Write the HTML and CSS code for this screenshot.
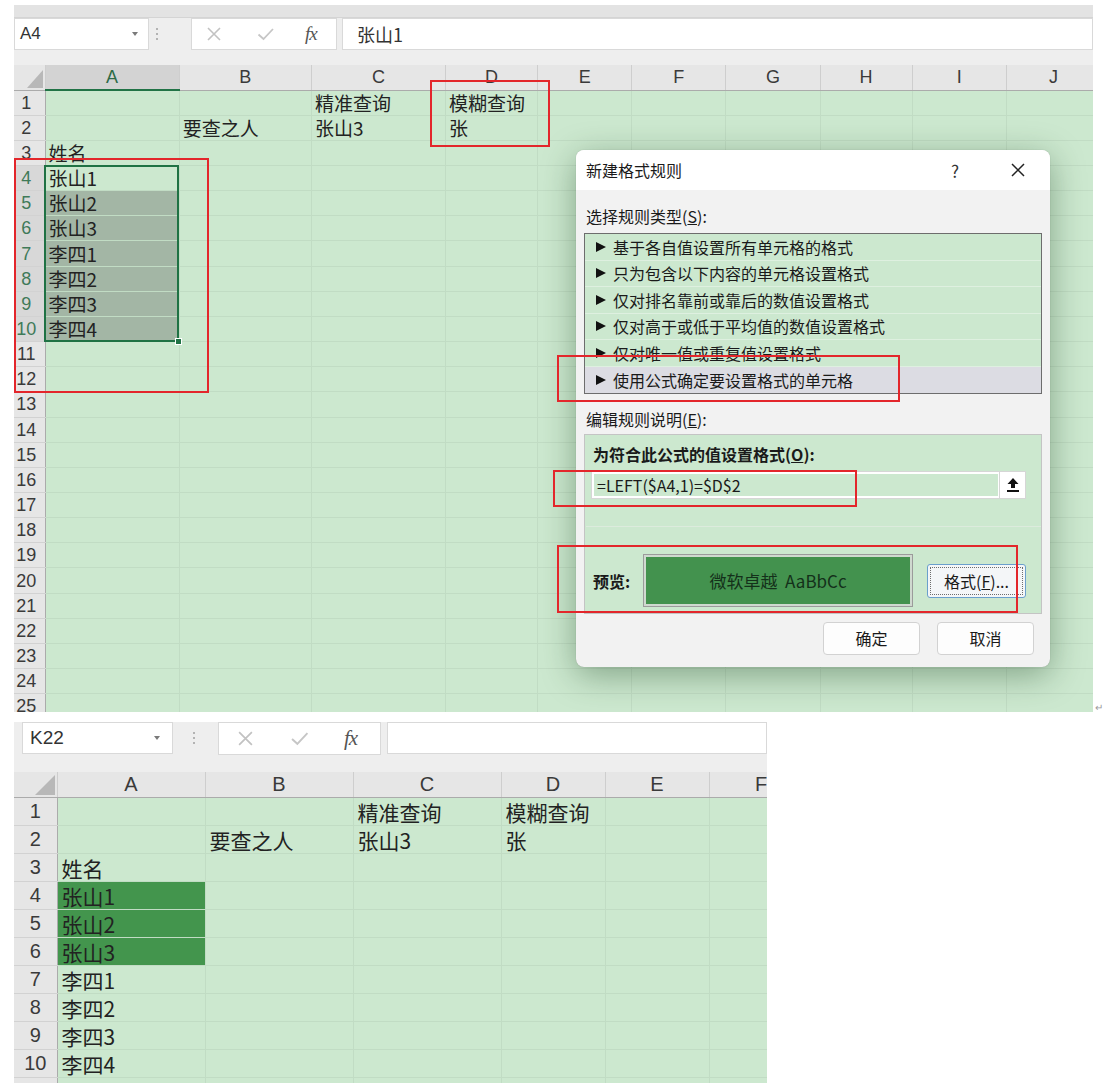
FILE: index.html
```html
<html lang="zh-CN">
<head>
  <meta charset="UTF-8">
  <title>条件格式 模糊查询</title>
  <link rel="stylesheet" href="styles.css">
</head>
<body>
  <div class="row1">
    <div class="shot shot1">
      <div class="strip"></div>
      <div class="toolbar">
        <div class="namebox"><span>A4</span><span class="caret"></span></div>
        <div class="grip"><i></i><i></i><i></i></div>
        <div class="fxbox">
          <svg class="ic-x" width="16" height="16" viewBox="0 0 16 16"><path d="M2 2L14 14M14 2L2 14" stroke="#c2c2c2" stroke-width="1.6"/></svg>
          <svg class="ic-ok" width="18" height="16" viewBox="0 0 18 16"><path d="M1.5 8.5L6.5 13L16 3" stroke="#c6c6c6" stroke-width="1.8" fill="none"/></svg>
          <span class="fx">fx</span>
        </div>
        <div class="fxinput">张山1</div>
      </div>
      <table class="sheet">
        <colgroup><col class="c-rh"><col class="c-w1"><col class="c-w2"><col class="c-w1"><col class="c-d"><col class="c-n"><col class="c-n"><col class="c-n"><col class="c-d"><col class="c-n"><col class="c-n"></colgroup>
        <thead>
          <tr><th class="corner"><svg width="16" height="18" viewBox="0 0 16 18"><path d="M16 0V18H0Z" fill="#b8b8b8"/></svg></th><th class="cur">A</th><th>B</th><th>C</th><th>D</th><th>E</th><th>F</th><th>G</th><th>H</th><th>I</th><th>J</th></tr>
        </thead>
        <tbody>
          <tr><th>1</th><td></td><td></td><td>精准查询</td><td>模糊查询</td><td></td><td></td><td></td><td></td><td></td><td></td></tr>
          <tr><th>2</th><td></td><td>要查之人</td><td>张山3</td><td>张</td><td></td><td></td><td></td><td></td><td></td><td></td></tr>
          <tr><th>3</th><td>姓名</td><td></td><td></td><td></td><td></td><td></td><td></td><td></td><td></td><td></td></tr>
          <tr><th class="cur">4</th><td>张山1</td><td></td><td></td><td></td><td></td><td></td><td></td><td></td><td></td><td></td></tr>
          <tr><th class="cur">5</th><td class="hl">张山2</td><td></td><td></td><td></td><td></td><td></td><td></td><td></td><td></td><td></td></tr>
          <tr><th class="cur">6</th><td class="hl">张山3</td><td></td><td></td><td></td><td></td><td></td><td></td><td></td><td></td><td></td></tr>
          <tr><th class="cur">7</th><td class="hl">李四1</td><td></td><td></td><td></td><td></td><td></td><td></td><td></td><td></td><td></td></tr>
          <tr><th class="cur">8</th><td class="hl">李四2</td><td></td><td></td><td></td><td></td><td></td><td></td><td></td><td></td><td></td></tr>
          <tr><th class="cur">9</th><td class="hl">李四3</td><td></td><td></td><td></td><td></td><td></td><td></td><td></td><td></td><td></td></tr>
          <tr><th class="cur">10</th><td class="hl">李四4</td><td></td><td></td><td></td><td></td><td></td><td></td><td></td><td></td><td></td></tr>
          <tr><th>11</th><td></td><td></td><td></td><td></td><td></td><td></td><td></td><td></td><td></td><td></td></tr>
          <tr><th>12</th><td></td><td></td><td></td><td></td><td></td><td></td><td></td><td></td><td></td><td></td></tr>
          <tr><th>13</th><td></td><td></td><td></td><td></td><td></td><td></td><td></td><td></td><td></td><td></td></tr>
          <tr><th>14</th><td></td><td></td><td></td><td></td><td></td><td></td><td></td><td></td><td></td><td></td></tr>
          <tr><th>15</th><td></td><td></td><td></td><td></td><td></td><td></td><td></td><td></td><td></td><td></td></tr>
          <tr><th>16</th><td></td><td></td><td></td><td></td><td></td><td></td><td></td><td></td><td></td><td></td></tr>
          <tr><th>17</th><td></td><td></td><td></td><td></td><td></td><td></td><td></td><td></td><td></td><td></td></tr>
          <tr><th>18</th><td></td><td></td><td></td><td></td><td></td><td></td><td></td><td></td><td></td><td></td></tr>
          <tr><th>19</th><td></td><td></td><td></td><td></td><td></td><td></td><td></td><td></td><td></td><td></td></tr>
          <tr><th>20</th><td></td><td></td><td></td><td></td><td></td><td></td><td></td><td></td><td></td><td></td></tr>
          <tr><th>21</th><td></td><td></td><td></td><td></td><td></td><td></td><td></td><td></td><td></td><td></td></tr>
          <tr><th>22</th><td></td><td></td><td></td><td></td><td></td><td></td><td></td><td></td><td></td><td></td></tr>
          <tr><th>23</th><td></td><td></td><td></td><td></td><td></td><td></td><td></td><td></td><td></td><td></td></tr>
          <tr><th>24</th><td></td><td></td><td></td><td></td><td></td><td></td><td></td><td></td><td></td><td></td></tr>
          <tr><th>25</th><td></td><td></td><td></td><td></td><td></td><td></td><td></td><td></td><td></td><td></td></tr>
        </tbody>
      </table>

      <!-- selected range A4:A10 -->
      <div class="selbox"><span class="handle"></span></div>

      <div class="dialog">
        <div class="dlg-title">
          <span class="dlg-name">新建格式规则</span>
          <span class="dlg-help">?</span>
          <svg class="dlg-close" width="14" height="14" viewBox="0 0 14 14"><path d="M1 1L13 13M13 1L1 13" stroke="#222" stroke-width="1.5"/></svg>
        </div>
        <div class="dlg-body">
          <div class="dlg-label">选择规则类型(<u>S</u>):</div>
          <ul class="rule-list">
            <li>基于各自值设置所有单元格的格式</li>
            <li>只为包含以下内容的单元格设置格式</li>
            <li>仅对排名靠前或靠后的数值设置格式</li>
            <li>仅对高于或低于平均值的数值设置格式</li>
            <li>仅对唯一值或重复值设置格式</li>
            <li class="on">使用公式确定要设置格式的单元格</li>
          </ul>
          <div class="dlg-label label2">编辑规则说明(<u>E</u>):</div>
          <div class="group">
            <div class="group-title">为符合此公式的值设置格式(<u>O</u>):</div>
            <div class="formula-row">
              <div class="formula-input">=LEFT($A4,1)=$D$2</div>
              <div class="ref-btn"><svg width="14" height="16" viewBox="0 0 14 16"><path d="M7 1L1.5 7H5V11H9V7H12.5Z" fill="#111"/><rect x="1" y="13" width="12" height="2" fill="#111"/></svg></div>
            </div>
            <div class="sep"></div>
            <div class="preview-row">
              <span class="preview-label">预览:</span>
              <div class="preview">微软卓越&nbsp;&nbsp;AaBbCc</div>
              <div class="fmt-btn">格式(<u>F</u>)...</div>
            </div>
          </div>
          <div class="dlg-buttons">
            <div class="btn">确定</div>
            <div class="btn">取消</div>
          </div>
        </div>
      </div>

      <!-- red annotation frames -->
      <div class="redbox rb-d"></div>
      <div class="redbox rb-a"></div>
      <div class="redbox rb-rule"></div>
      <div class="redbox rb-formula"></div>
      <div class="redbox rb-preview"></div>
    </div>
    <span class="pmark">↵</span>
  </div>

  <div class="shot shot2">
    <div class="toolbar">
      <div class="namebox"><span>K22</span><span class="caret"></span></div>
      <div class="grip"><i></i><i></i><i></i></div>
      <div class="fxbox">
        <svg class="ic-x" width="17" height="17" viewBox="0 0 16 16"><path d="M2 2L14 14M14 2L2 14" stroke="#c2c2c2" stroke-width="1.6"/></svg>
        <svg class="ic-ok" width="20" height="17" viewBox="0 0 18 16"><path d="M1.5 8.5L6.5 13L16 3" stroke="#c6c6c6" stroke-width="1.8" fill="none"/></svg>
        <span class="fx">fx</span>
      </div>
      <div class="fxinput"></div>
    </div>
    <table class="sheet">
      <colgroup><col class="c-rh"><col class="c-w"><col class="c-w"><col class="c-w"><col class="c-n"><col class="c-n"><col class="c-n"></colgroup>
      <thead>
        <tr><th class="corner"><svg width="20" height="20" viewBox="0 0 20 20"><path d="M20 0V20H0Z" fill="#b8b8b8"/></svg></th><th>A</th><th>B</th><th>C</th><th>D</th><th>E</th><th>F</th></tr>
      </thead>
      <tbody>
        <tr><th>1</th><td></td><td></td><td>精准查询</td><td>模糊查询</td><td></td><td></td></tr>
        <tr><th>2</th><td></td><td>要查之人</td><td>张山3</td><td>张</td><td></td><td></td></tr>
        <tr><th>3</th><td>姓名</td><td></td><td></td><td></td><td></td><td></td></tr>
        <tr><th>4</th><td class="cf">张山1</td><td></td><td></td><td></td><td></td><td></td></tr>
        <tr><th>5</th><td class="cf">张山2</td><td></td><td></td><td></td><td></td><td></td></tr>
        <tr><th>6</th><td class="cf">张山3</td><td></td><td></td><td></td><td></td><td></td></tr>
        <tr><th>7</th><td>李四1</td><td></td><td></td><td></td><td></td><td></td></tr>
        <tr><th>8</th><td>李四2</td><td></td><td></td><td></td><td></td><td></td></tr>
        <tr><th>9</th><td>李四3</td><td></td><td></td><td></td><td></td><td></td></tr>
        <tr><th>10</th><td>李四4</td><td></td><td></td><td></td><td></td><td></td></tr>
        <tr><th></th><td></td><td></td><td></td><td></td><td></td><td></td></tr>
      </tbody>
    </table>
  </div>
</body>
</html>
```

FILE: styles.css
```css
* {
  box-sizing: border-box;
}
body {
  margin: 0;
  padding-top: 5px;
  background: #fff;
  color: #222;
  font-family: "Noto Sans CJK SC", sans-serif;
}
.row1 {
  display: flex;
  align-items: flex-end;
}
.pmark {
  margin-left: 2px;
  margin-bottom: 0;
  font-size: 10px;
  line-height: 10px;
  color: #9a9a9a;
}
.shot {
  position: relative;
  overflow: hidden;
  margin-left: 14px;
}
.shot1 {
  width: 1079px;
  height: 707px;
}
.shot2 {
  width: 753px;
  height: 361px;
  margin-top: 10px;
}

/* formula bar */
.strip {
  height: 13px;
  background: #e3e3e3;
  border-bottom: 1px solid #d4d4d4;
}
.toolbar {
  display: flex;
  align-items: flex-start;
  background: #eeeeee;
}
.shot1 .toolbar {
  height: 47px;
}
.shot2 .toolbar {
  height: 50px;
  padding-left: 8px;
}
.namebox {
  display: flex;
  align-items: center;
  justify-content: space-between;
  height: 32px;
  background: #fff;
  border: 1px solid #d9d9d9;
  color: #333;
  font-family: "Liberation Sans", sans-serif;
}
.shot1 .namebox {
  width: 135px;
  padding: 0 10px 0 5px;
  font-size: 17px;
}
.shot2 .namebox {
  width: 151px;
  padding: 0 12px 0 7px;
  font-size: 19px;
}
.caret {
  width: 0;
  height: 0;
  border-left: 3px solid transparent;
  border-right: 3px solid transparent;
  border-top: 4px solid #7a7a7a;
}
.grip {
  display: flex;
  flex-direction: column;
  gap: 3px;
  padding-top: 10px;
}
.grip i {
  width: 2px;
  height: 2px;
  background: #b3b3b3;
}
.shot1 .grip {
  width: 42px;
  padding-left: 7px;
}
.shot2 .grip {
  width: 45px;
  padding-left: 20px;
}
.fxbox {
  display: flex;
  align-items: center;
  height: 32px;
  background: #fff;
  border: 1px solid #d9d9d9;
}
.shot1 .fxbox {
  width: 146px;
  padding-left: 14px;
}
.shot1 .ic-ok {
  margin-left: 35px;
}
.shot1 .fx {
  margin-left: 30px;
}
.shot2 .fxbox {
  width: 163px;
  height: 33px;
  padding-left: 18px;
}
.shot2 .ic-ok {
  margin-left: 36px;
}
.shot2 .fx {
  margin-left: 34px;
  font-size: 21px;
}
.fx {
  font-family: "Liberation Serif", serif;
  font-style: italic;
  font-size: 19px;
  color: #555;
  letter-spacing: -1px;
}
.fxinput {
  flex: 1;
  height: 32px;
  margin-left: 5px;
  padding-left: 14px;
  background: #fff;
  border: 1px solid #d9d9d9;
  font-size: 18px;
  line-height: 30px;
  color: #333;
}
.shot2 .fxinput {
  margin-left: 6px;
}

/* sheet grid */
.sheet {
  border-collapse: collapse;
  table-layout: fixed;
}
.shot1 .sheet {
  width: 1087px;
}
.shot2 .sheet {
  width: 798px;
}
.c-rh { width: 31px; }
.c-w1 { width: 134px; }
.c-w2 { width: 132px; }
.c-d { width: 92px; }
.c-n { width: 94px; }
.shot2 .c-rh { width: 43px; }
.shot2 .c-w { width: 148px; }
.shot2 .c-n { width: 104px; }
.sheet th {
  padding: 0;
  background: #e6e6e6;
  font-weight: normal;
  color: #3a3a3a;
  font-family: "Liberation Sans", sans-serif;
}
.sheet thead th {
  height: 25px;
  border-right: 1px solid #cecece;
  border-bottom: 1px solid #ababab;
  font-size: 18px;
}
.sheet thead th.corner {
  text-align: right;
  vertical-align: bottom;
  padding: 0 2px 2px 0;
}
.corner svg {
  display: block;
  margin-left: auto;
}
.sheet tbody th {
  border-bottom: 1px solid #d2d2d2;
  border-right: 1px solid #ababab;
  text-align: center;
  padding-right: 6px;
  font-size: 18px;
  line-height: 20px;
}
.sheet thead th.cur {
  background: #d3d3d3;
  color: #2d6b47;
  border-bottom: 2px solid #217346;
}
.sheet tbody th.cur {
  background: #d8d8d8;
  color: #3f7a58;
}
.sheet td {
  padding: 0 3px;
  background: #cce8cf;
  border-right: 1px solid #c1dcc4;
  border-bottom: 1px solid #c1dcc4;
  white-space: nowrap;
  overflow: visible;
  font-size: 19px;
  line-height: 22px;
  color: #222;
}
.shot1 tbody tr {
  height: 25.17px;
}
.sheet td.hl {
  background: #a3b6a5;
}
.shot2 .sheet thead th {
  font-size: 20px;
}
.shot2 tbody tr {
  height: 28px;
}
.shot2 .sheet tbody th {
  font-size: 20px;
  padding-right: 0;
}
.shot2 .sheet td {
  padding: 2px 4px 0;
  font-size: 21px;
  line-height: 24px;
}
.sheet td.cf {
  background: #43954d;
}

.selbox {
  position: absolute;
  left: 30px;
  top: 160px;
  width: 135px;
  height: 177px;
  border: 2px solid #1f7244;
}
.handle {
  position: absolute;
  right: -5px;
  bottom: -5px;
  width: 7px;
  height: 7px;
  background: #1f7244;
  border: 1px solid #fff;
}

/* dialog */
.dialog {
  position: absolute;
  left: 562px;
  top: 145px;
  width: 474px;
  height: 517px;
  border-radius: 8px;
  background: #f2f2f2;
  box-shadow: 0 8px 34px rgba(20, 60, 25, 0.4), 0 0 1px rgba(0, 0, 0, 0.3);
  color: #1a1a1a;
}
.dlg-title {
  display: flex;
  align-items: center;
  height: 40px;
  padding: 0 25px 0 10px;
  background: #fff;
  border-radius: 8px 8px 0 0;
}
.dlg-name {
  flex: 1;
  font-size: 16px;
}
.dlg-help {
  width: 20px;
  margin-right: 46px;
  text-align: center;
  font-size: 17px;
  color: #333;
}
.dlg-body {
  padding: 14px 8px 12px;
}
.dlg-label {
  height: 24px;
  padding-left: 2px;
  font-size: 16px;
  line-height: 24px;
}
.label2 {
  margin-top: 13px;
}
.rule-list {
  list-style: none;
  margin: 5px 0 0;
  padding: 0;
  border: 1px solid #6d6d6d;
  background: #cce8cf;
}
.rule-list li {
  display: flex;
  align-items: center;
  height: 26.5px;
  padding-left: 11px;
  border-bottom: 1px solid rgba(255, 255, 255, 0.35);
  font-size: 16px;
}
.rule-list li::before {
  content: "";
  width: 0;
  height: 0;
  margin-right: 7px;
  border-left: 10px solid #111;
  border-top: 5.5px solid transparent;
  border-bottom: 5.5px solid transparent;
}
.rule-list li.on {
  background: #dcdce3;
  border-bottom: none;
}
.group {
  height: 180px;
  margin-top: 3px;
  padding: 7px 6px 0 7px;
  border: 1px solid #c4c4c4;
  background: #cce8cf;
}
.group-title {
  height: 24px;
  padding-left: 1px;
  font-size: 16px;
  font-weight: bold;
  line-height: 24px;
}
.formula-row {
  display: flex;
  margin-top: 6px;
}
.formula-input {
  width: 408px;
  height: 26px;
  padding-left: 3px;
  border: 2px solid #fff;
  box-shadow: 0 0 0 1px #d6d6d6;
  font-size: 16px;
  line-height: 22px;
}
.ref-btn {
  display: flex;
  align-items: center;
  justify-content: center;
  width: 25px;
  height: 26px;
  background: #fff;
  box-shadow: 0 0 0 1px #d6d6d6;
}
.sep {
  height: 1px;
  margin: 28px -6px 0;
  background: #dcebdd;
}
.preview-row {
  display: flex;
  align-items: center;
  margin-top: 27px;
}
.preview-label {
  width: 51px;
  padding-left: 1px;
  font-size: 16px;
  font-weight: bold;
}
.preview {
  width: 270px;
  height: 53px;
  border: 1px solid #9b9b9b;
  box-shadow: inset 0 0 0 2px #cfd9cf;
  background: #43924e;
  text-align: center;
  font-size: 17px;
  line-height: 51px;
  color: #14301a;
}
.fmt-btn {
  width: 99px;
  height: 34px;
  margin-left: 14px;
  border: 1px solid #6a9fcc;
  border-radius: 3px;
  background: #f4f6f8;
  outline: 1px dotted #6d6d6d;
  outline-offset: -4px;
  text-align: center;
  font-size: 16px;
  line-height: 32px;
}
.dlg-buttons {
  display: flex;
  justify-content: flex-end;
  gap: 17px;
  margin: 8px 8px 0 0;
}
.btn {
  width: 97px;
  height: 33px;
  border: 1px solid #d2d2d2;
  border-radius: 4px;
  background: #fdfdfd;
  text-align: center;
  font-size: 16px;
  line-height: 31px;
}

/* annotation frames */
.redbox {
  position: absolute;
  border: 2px solid #e3262b;
}
.rb-d { left: 416px; top: 75px; width: 120px; height: 67px; }
.rb-a { left: 0; top: 153px; width: 195px; height: 235px; }
.rb-rule { left: 543px; top: 350px; width: 343px; height: 47px; }
.rb-formula { left: 539px; top: 465px; width: 304px; height: 37px; }
.rb-preview { left: 543px; top: 540px; width: 461px; height: 68px; }
```
